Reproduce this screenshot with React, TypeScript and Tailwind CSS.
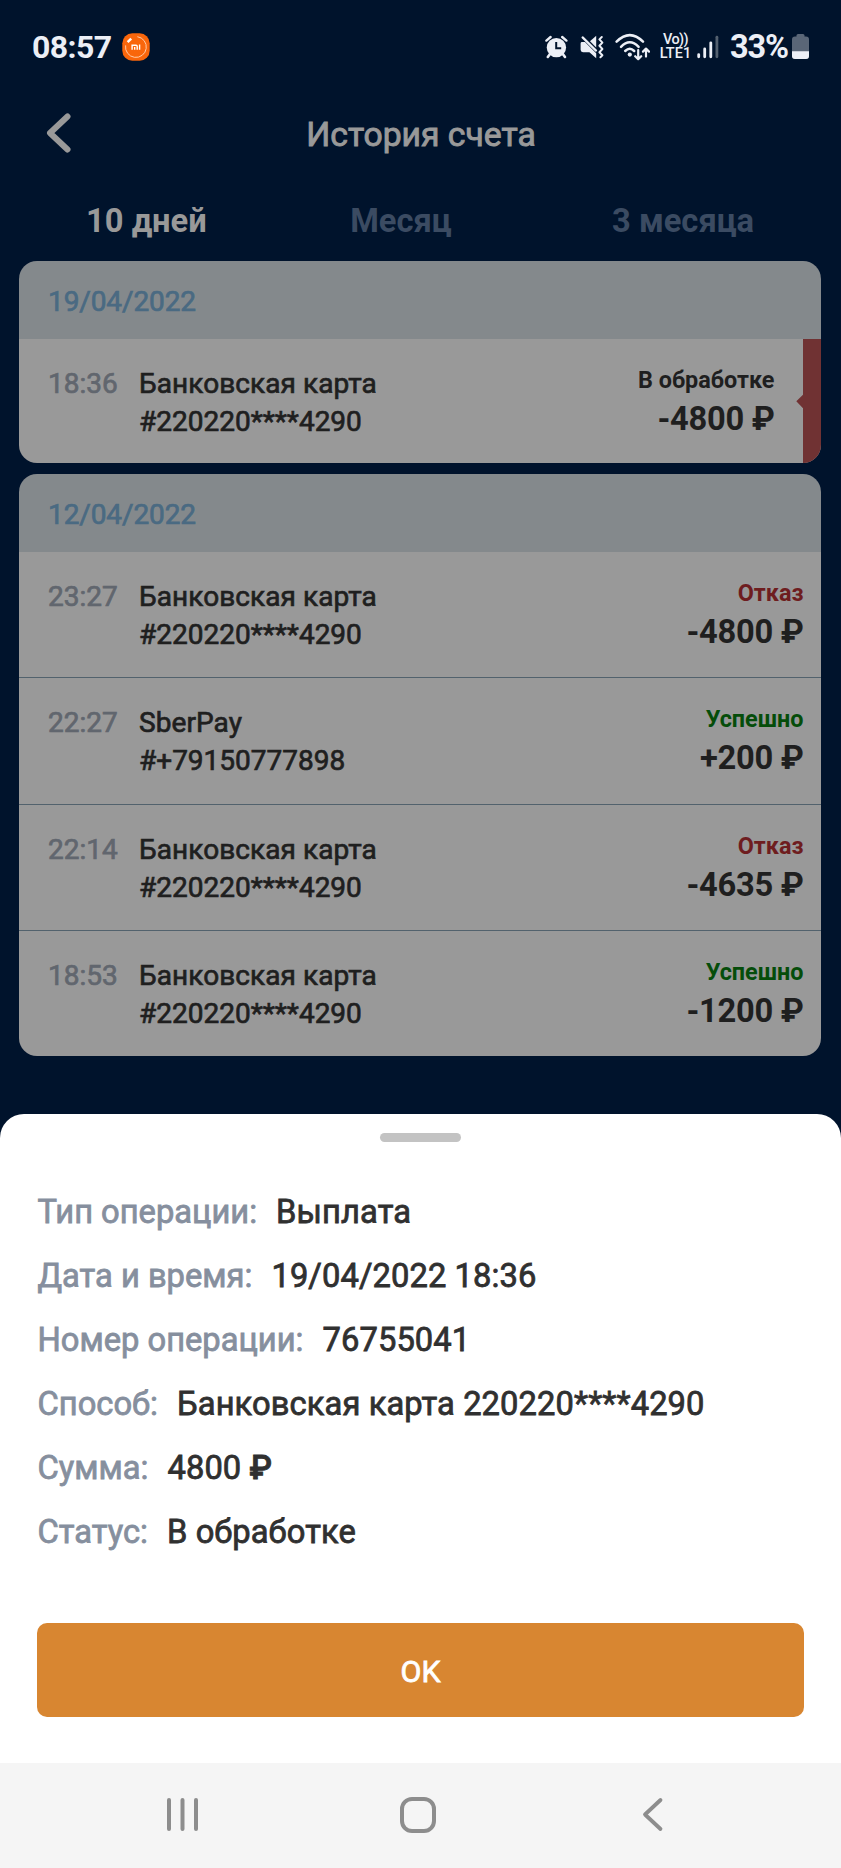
import type { ReactNode } from "react";

type Operation = {
  time: string;
  title: string;
  account: string;
  status: string;
  tone: "pending" | "failed" | "done";
  amount: string;
};

const pending: Operation[] = [
  { time: "18:36", title: "Банковская карта", account: "#220220****4290", status: "В обработке", tone: "pending", amount: "-4800 ₽" },
];

const history: Operation[] = [
  { time: "23:27", title: "Банковская карта", account: "#220220****4290", status: "Отказ", tone: "failed", amount: "-4800 ₽" },
  { time: "22:27", title: "SberPay", account: "#+79150777898", status: "Успешно", tone: "done", amount: "+200 ₽" },
  { time: "22:14", title: "Банковская карта", account: "#220220****4290", status: "Отказ", tone: "failed", amount: "-4635 ₽" },
  { time: "18:53", title: "Банковская карта", account: "#220220****4290", status: "Успешно", tone: "done", amount: "-1200 ₽" },
];

const details = [
  { label: "Тип операции:", value: "Выплата" },
  { label: "Дата и время:", value: "19/04/2022 18:36" },
  { label: "Номер операции:", value: "76755041" },
  { label: "Способ:", value: "Банковская карта 220220****4290" },
  { label: "Сумма:", value: "4800", currency: "₽" },
  { label: "Статус:", value: "В обработке" },
];

const toneClass = {
  pending: "text-[#1f1f1f]",
  failed: "text-[#6e1d1f]",
  done: "text-[#054d0a]",
};

function StatusBar() {
  return (
    <div className="flex h-[94px] items-center px-[32px] pb-[1px] text-[#eceff6]">
      <span className="w-[90px] text-[32px] leading-[40px] font-bold tracking-[-0.6px]">08:57</span>
      <svg className="block h-[28px] w-[28px]" viewBox="0 0 28 28">
        <rect x="0.3" y="0.3" width="27.4" height="27.4" rx="10" fill="#f9660b" />
        <circle cx="13.9" cy="14" r="10.4" fill="none" stroke="#ffd0ae" strokeWidth="0.9" strokeDasharray="49 16.3" transform="rotate(-82 13.9 14)" />
        <path d="M5.6 9.2 9.2 5.6" stroke="#fff" strokeWidth="2.4" />
        <path d="M10.1 16.8V12.2H14Q15.2 12.2 15.2 13.4V16.8M12.7 14V16.8M17.6 11.5V16.8" fill="none" stroke="#fff" strokeWidth="1.4" />
      </svg>
      <div className="ml-auto flex items-center">
        <svg className="mr-[12px] h-[24px] w-[23px]" viewBox="0 0 23 24">
          <circle cx="11.4" cy="12.6" r="9.7" fill="currentColor" />
          <path d="M1.4 5.6 5.6 2M21.4 5.6 17.2 2" stroke="currentColor" strokeWidth="2.4" strokeLinecap="round" />
          <path d="M5 19 2.8 22M17.8 19 20 22" stroke="currentColor" strokeWidth="2.6" strokeLinecap="round" />
          <path d="M11.2 7v6.2h5" fill="none" stroke="#00132c" strokeWidth="2" />
        </svg>
        <svg className="mr-[11px] h-[24px] w-[24px]" viewBox="0 0 24 24">
          <path d="M.6 8.4Q.6 7 2 7H5L16.2 18.2V23.2L9.4 17.2H3Q.6 17.2.6 14.8z" fill="currentColor" />
          <path d="M10 6.2 16.2.8V12.4z" fill="currentColor" />
          <path d="M2.6 2.4 16 15.6" stroke="currentColor" strokeWidth="2.2" strokeLinecap="round" />
          <path d="M21.8 2 19.4 4.4l3 3.2-3 3.2 3 3.2-3 3.2 3 3-2 2" fill="none" stroke="currentColor" strokeWidth="2" strokeLinecap="round" strokeLinejoin="round" />
        </svg>
        <svg className="mr-[10px] h-[28px] w-[35px]" viewBox="0 0 35 28">
          <g fill="none" stroke="currentColor" strokeWidth="2.5" strokeLinecap="round" strokeLinejoin="round">
            <path d="M1.6 8.6Q14.8-4.4 28 8.6" />
            <path d="M6 13.8q8.8-9.2 17.6 0" />
            <path d="M10.2 18q4.6-4.4 9 0" />
            <path d="M23.2 17v9M20.2 23.2l3 3 3-3M31 23.6v-8M28 18.6l3-3 3 3" strokeWidth="2.2" />
          </g>
          <circle cx="14.8" cy="21.6" r="2.1" fill="currentColor" />
        </svg>
        <div className="mr-[6px] flex w-[31px] flex-col items-center text-[14.5px] leading-[13.5px] font-medium whitespace-nowrap">
          <span className="tracking-[-0.6px]">Vo))</span>
          <span className="tracking-[0.1px]">LTE1</span>
        </div>
        <svg className="mr-[11px] h-[24px] w-[22px]" viewBox="0 0 22 24">
          <g stroke="currentColor" strokeWidth="2.8" strokeLinecap="round">
            <path d="M1.7 19.6v2.2M7.7 14v7.8M13.8 7.8v14" />
            <path d="M19.9 2.2v19.6" stroke="#53606f" />
          </g>
        </svg>
        <span className="w-[62px] text-[32.5px] leading-[40px] font-bold tracking-[-1.2px]">33%</span>
        <svg className="h-[25px] w-[17px]" viewBox="0 0 17 25">
          <rect x="4.5" y="0" width="8" height="5" rx="1.5" fill="#5a6677" />
          <rect x="0" y="2.6" width="17" height="22.4" rx="3" fill="#5a6677" />
          <path d="M0 17.3H17V22Q17 25 14 25H3Q0 25 0 22z" fill="currentColor" />
        </svg>
      </div>
    </div>
  );
}

function OperationRow({ item }: { item: Operation }) {
  const isPending = item.tone === "pending";
  return (
    <div className="relative flex h-full bg-[#999999] pl-[29px] text-[28px] leading-[38.3px] text-[#1f1f1f]">
      <span className="w-[91px] pt-[26px] text-[#61666e] [-webkit-text-stroke:0.7px]">{item.time}</span>
      <div className="flex-1 pt-[26px] [-webkit-text-stroke:0.7px]">
        <div className="tracking-[0.07px]">{item.title}</div>
        <div>{item.account}</div>
      </div>
      <div className={isPending ? "pt-[22px] pr-[46.5px] text-right font-bold" : "pt-[22px] pr-[17.5px] text-right font-bold"}>
        <div className={`text-[23.4px] leading-[39px] ${toneClass[item.tone]}`}>{item.status}</div>
        <div className="text-[32.7px] leading-[38px] tracking-[-0.3px]">{item.amount}</div>
      </div>
      {isPending && (
        <svg className="absolute top-0 right-0 h-full w-[25px]" viewBox="0 0 25 124.5" preserveAspectRatio="none">
          <path d="M7 0h18v124.5H7V69L.3 62.2 7 55.5z" fill="#703233" />
        </svg>
      )}
    </div>
  );
}

function DayCard({ date, children }: { date: string; children: ReactNode }) {
  return (
    <section className="overflow-hidden rounded-[18px]">
      <div className="h-[77.5px] bg-[#84898c] pt-[20.5px] pl-[29px] text-[28px] leading-[39px] tracking-[-0.1px] text-[#4a6a82] [-webkit-text-stroke:0.7px]">{date}</div>
      {children}
    </section>
  );
}

export default function App() {
  return (
    <div className="flex h-[1868px] w-[841px] flex-col overflow-hidden bg-[#00132c] font-[Roboto,sans-serif]">
      <StatusBar />
      <header className="flex h-[80px] items-center pl-[46px]">
        <svg className="mb-[3px] h-[40px] w-[26px]" viewBox="0 0 26 40">
          <path d="M21.5 3.5 4 20L21.5 36.5" fill="none" stroke="#999" strokeWidth="6" strokeLinecap="round" strokeLinejoin="round" />
        </svg>
        <h1 className="flex-1 pt-[2px] pr-[71px] text-center text-[33.7px] leading-[40px] text-[#999] [-webkit-text-stroke:0.9px]">История счета</h1>
      </header>
      <nav className="flex h-[87px] pt-[27px] pl-[86px] text-center text-[32.7px] leading-[40px] font-bold whitespace-nowrap text-[#3b4b62]">
        <span className="w-[120px] text-[#999]">10 дней</span>
        <span className="ml-[144px] w-[102px]">Месяц</span>
        <span className="ml-[160px] w-[142px]">3 месяца</span>
      </nav>
      <main className="flex h-[853px] flex-col gap-[11px] pr-[20px] pl-[19px]">
        <DayCard date="19/04/2022">
          <div className="h-[124.8px]">
            <OperationRow item={pending[0]} />
          </div>
        </DayCard>
        <DayCard date="12/04/2022">
          <div className="flex flex-col divide-y divide-[#52626d]">
            {history.map((item) => (
              <div key={item.time} className="h-[126.4px] last:h-[124.6px]">
                <OperationRow item={item} />
              </div>
            ))}
          </div>
        </DayCard>
      </main>
      <section className="flex h-[649px] flex-col rounded-t-[24px] bg-white px-[37px]">
        <div className="mx-auto mt-[19px] h-[9px] w-[81px] rounded-full bg-[#c3c3c3]" />
        <dl className="mt-[37.5px] pl-[0.5px] text-[32.7px] leading-[64.1px] whitespace-nowrap [-webkit-text-stroke:0.8px]">
          {details.map(({ label, value, currency }) => (
            <div key={label} className="flex gap-[19px]">
              <dt className="text-[#868f9e]">{label}</dt>
              <dd className="tracking-[0.1px] text-[#303030]">
                {value}
                {currency && <span className="font-medium"> {currency}</span>}
              </dd>
            </div>
          ))}
        </dl>
        <button className="mt-[59px] h-[94px] rounded-[10px] bg-[#d88631] pt-[4px] text-[30.4px] text-white [-webkit-text-stroke:0.8px]">OK</button>
      </section>
      <footer className="flex h-[105px] items-start bg-[#f5f5f5] pt-[34px] pl-[166px]">
        <svg className="h-[36px] w-[33px]" viewBox="0 0 33 36">
          <path d="M3 3v29M16.5 3v29M30 3v29" stroke="#8d8d8d" strokeWidth="4" strokeLinecap="round" />
        </svg>
        <svg className="ml-[201px] h-[36px] w-[36px]" viewBox="0 0 36 36">
          <rect x="2" y="2" width="32" height="32" rx="10" fill="none" stroke="#8d8d8d" strokeWidth="4" />
        </svg>
        <svg className="ml-[206px] h-[36px] w-[22px]" viewBox="0 0 22 36">
          <path d="M18.5 3 3 17.5L18.5 32" fill="none" stroke="#8d8d8d" strokeWidth="3.8" strokeLinecap="round" strokeLinejoin="round" />
        </svg>
      </footer>
    </div>
  );
}
